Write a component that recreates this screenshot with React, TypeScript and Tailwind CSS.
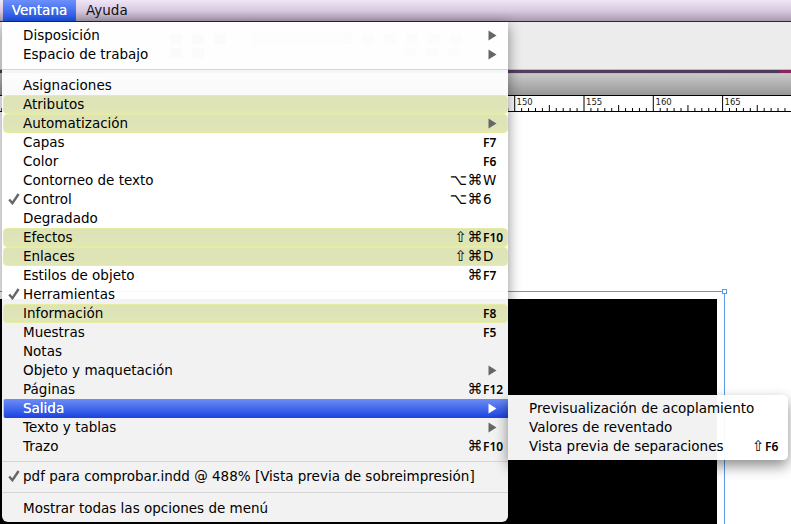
import React from "react";

type Row = { t: string; k?: string; arrow?: boolean; check?: boolean; hl?: boolean; active?: boolean };

const F = '"DejaVu Sans", sans-serif';

function Arrow({ white }: { white?: boolean }) {
  return (
    <svg width="9" height="11" viewBox="0 0 9 11" className="shrink-0">
      <path d="M0.5 0.5 L8.5 5.5 L0.5 10.5 Z" fill={white ? "#ffffff" : "#666666"} />
    </svg>
  );
}

function Check() {
  return (
    <svg width="12" height="12" viewBox="0 0 12 12" className="absolute left-[5px] top-[3px]">
      <path d="M1.2 6.5 L4.4 10.2 L10.6 1" fill="none" stroke="#666666" strokeWidth="2.4" />
    </svg>
  );
}

function Shortcut({ k, w }: { k: string; w: string }) {
  const m = k.match(/^([^A-Z0-9]*)(.*)$/)!;
  const letter = /^[A-Z0-9]$/.test(m[2]);
  return (
    <span className="flex items-center text-black">
      <span className="flex items-center justify-end text-[15px] tracking-[0.5px]">{m[1]}</span>
      <span className={w}>
        <span
          className={letter ? "text-[13.5px]" : "text-[12px] font-semibold"}
          style={letter ? undefined : { fontFamily: '"Noto Sans", sans-serif' }}
        >
          {m[2]}
        </span>
      </span>
    </span>
  );
}

function MenuRow({ r }: { r: Row }) {
  const base = "relative ml-px flex h-[19px] items-center justify-between pl-[20px] text-[13.5px] leading-none";
  if (r.active)
    return (
      <div className={base + " rounded-l-[2px] border-l border-[#c9cf9a] bg-gradient-to-b from-[#6d8cf5] to-[#1d3fe0] pr-[11px] text-white [text-shadow:0_0_0.5px_#fff]"}>
        <span className="-ml-px">{r.t}</span>
        <Arrow white />
      </div>
    );
  return (
    <div
      className={
        base +
        (r.hl
          ? " rounded-[4px] border border-[#e6eca0] bg-gradient-to-b from-[#dde2b8] to-[#e1e6b6]"
          : "") +
        (r.k ? " pr-0" : r.hl ? " pr-[10px]" : " pr-[11px]") +
        " text-black"
      }
    >
      {r.check && <Check />}
      <span className={r.hl ? "-ml-px" : ""}>{r.t}</span>
      {r.arrow && <Arrow />}
      {r.k && <Shortcut k={r.k} w={r.hl ? "w-[24px]" : "w-[25px]"} />}
    </div>
  );
}

const rows: Row[] = [
  { t: "Asignaciones" },
  { t: "Atributos", hl: true },
  { t: "Automatización", hl: true, arrow: true },
  { t: "Capas", k: "F7" },
  { t: "Color", k: "F6" },
  { t: "Contorneo de texto", k: "⌥⌘W" },
  { t: "Control", k: "⌥⌘6", check: true },
  { t: "Degradado" },
  { t: "Efectos", k: "⇧⌘F10", hl: true },
  { t: "Enlaces", k: "⇧⌘D", hl: true },
  { t: "Estilos de objeto", k: "⌘F7" },
  { t: "Herramientas", check: true },
  { t: "Información", k: "F8", hl: true },
  { t: "Muestras", k: "F5" },
  { t: "Notas" },
  { t: "Objeto y maquetación", arrow: true },
  { t: "Páginas", k: "⌘F12" },
  { t: "Salida", active: true },
  { t: "Texto y tablas", arrow: true },
  { t: "Trazo", k: "⌘F10" },
];

function Ruler() {
  const ticks: React.ReactNode[] = [];
  const step = 69.3 / 10;
  for (let i = -75; i < 45; i++) {
    const x = 514.7 + i * step;
    const mod = ((i % 10) + 10) % 10;
    ticks.push(
      <line key={i} x1={x} x2={x} y1={mod === 0 ? 0 : mod === 5 ? 9 : 12} y2={15} stroke="#000" strokeWidth="1" />
    );
  }
  return (
    <svg width="791" height="15" className="block">
      {ticks}
      {[
        [516.5, "150"],
        [586, "155"],
        [655.5, "160"],
        [724.5, "165"],
      ].map(([x, t]) => (
        <text key={t as string} x={x as number} y="9" fontSize="8.5" fill="#222" fontFamily={F}>
          {t}
        </text>
      ))}
    </svg>
  );
}

function ToolbarGhost() {
  return (
    <div className="flex h-full flex-col justify-center gap-[4px] pl-[170px]">
      <div className="flex items-center gap-[10px]">
        {[0, 1, 2].map((i) => (
          <span key={i} className="h-[10px] w-[12px] bg-[#b0b0b0]" />
        ))}
        <span className="ml-[16px] h-[11px] w-[100px] border border-[#a5a5a5] bg-[#cccccc]" />
        {[0, 1, 2, 3, 4].map((i) => (
          <span key={i} className="h-[10px] w-[12px] bg-[#bbbbbb]" />
        ))}
      </div>
      <div className="flex items-center gap-[10px]">
        {[0, 1].map((i) => (
          <span key={i} className="h-[10px] w-[12px] bg-[#b0b0b0]" />
        ))}
        <span className="ml-[190px] h-[8px] w-[12px] bg-[#c5c5c5]" />
        <span className="h-[8px] w-[12px] bg-[#c5c5c5]" />
        <span className="h-[8px] w-[12px] bg-[#c5c5c5]" />
      </div>
    </div>
  );
}

export default function App() {
  return (
    <div className="relative flex h-[524px] w-[791px] flex-col overflow-hidden bg-white" style={{ fontFamily: F }}>
      {/* menu bar */}
      <div className="flex h-[22px] shrink-0 border-b border-[#2a2a2a] bg-gradient-to-b from-[#efe6f6] via-[#d9c9e2] to-[#a79cad] pl-[3px] text-[13.5px] leading-none text-[#111]">
        <div className="flex h-full w-[73px] items-center justify-center bg-gradient-to-b from-[#6d90fb] to-[#1c4fe2] text-white [text-shadow:0_0_0.5px_#fff]">
          Ventana
        </div>
        <div className="ml-[10px] flex h-full items-center">Ayuda</div>
      </div>
      {/* toolbar */}
      <div className="h-[47px] shrink-0 bg-[#ececec]">
        <ToolbarGhost />
      </div>
      <div className="h-[5px] shrink-0 border-y border-[#bdbdbd] bg-gradient-to-r from-[#4d3a58] via-[#5a3f66] to-[#4d3a58]">
        <div className="ml-auto h-full w-[11px] bg-[#8a2560]" />
      </div>
      <div className="flex h-[21px] shrink-0 items-center bg-gradient-to-b from-[#c9c9c9] to-[#979797] pl-[20px]">
        <div className="h-[9px] w-[320px] bg-[#a0a0a0]" />
      </div>
      {/* ruler */}
      <div className="h-[17px] shrink-0 border-y border-black bg-white">
        <Ruler />
      </div>
      {/* canvas */}
      <div className="relative min-h-0 flex-1 bg-white">
        <div className="absolute left-0 top-[179px] h-[300px] w-[725px] border-r border-t border-[#5b9bea] pr-[7px] pt-[7px]">
          <div className="h-full w-full bg-black" />
        </div>
        <div className="absolute left-[722px] top-[177px] h-[5px] w-[5px] border border-[#5b9bea] bg-white" />
      </div>

      {/* main menu */}
      <div className="absolute left-[2px] top-[22px] h-[500px] w-[506px] rounded-b-[6px] bg-white/95 pt-[4px] shadow-[0_4px_14px_rgba(0,0,0,0.45)]">
        <MenuRow r={{ t: "Disposición", arrow: true }} />
        <MenuRow r={{ t: "Espacio de trabajo", arrow: true }} />
        <div className="mb-[6px] mt-[5px] h-px bg-[#d6d6d6]" />
        {rows.map((r) => (
          <MenuRow key={r.t} r={r} />
        ))}
        <div className="mb-[5px] mt-[5px] h-px bg-[#d6d6d6]" />
        <MenuRow r={{ t: "pdf para comprobar.indd @ 488% [Vista previa de sobreimpresión]", check: true }} />
        <div className="mb-[6px] mt-[6px] h-px bg-[#d6d6d6]" />
        <MenuRow r={{ t: "Mostrar todas las opciones de menú" }} />
      </div>

      {/* submenu */}
      <div className="absolute left-[508px] top-[395px] h-[65px] w-[280px] rounded-r-[5px] bg-white/95 pt-[4px] text-[13.5px] leading-none text-black shadow-[0_6px_14px_rgba(0,0,0,0.45)]">
        {[
          ["Previsualización de acoplamiento", ""],
          ["Valores de reventado", ""],
          ["Vista previa de separaciones", "⇧F6"],
        ].map(([t, k]) => (
          <div key={t} className="flex h-[19px] items-center justify-between pl-[21px] pr-0">
            <span>{t}</span>
            {k && <Shortcut k={k} w="w-[23px]" />}
          </div>
        ))}
      </div>
    </div>
  );
}
